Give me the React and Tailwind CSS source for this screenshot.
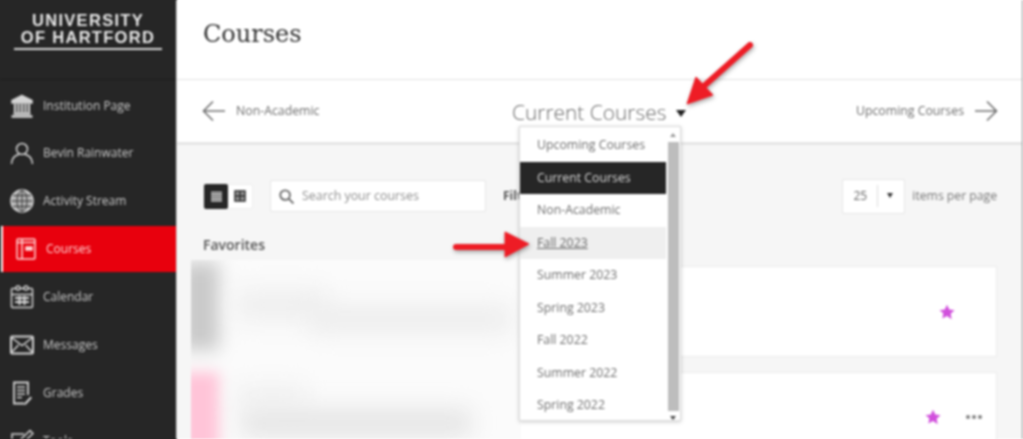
const Ico = ({ children, w = 24, h = 24, vb = "0 0 24 24", cls = "" }) => (
  <svg width={w} height={h} viewBox={vb} fill="none" stroke="#d4d4d4" strokeWidth="1.500" className={cls}>{children}</svg>
);
const icons = {
  inst: <Ico><path d="M12 1.500 2 6.500v2.500h20V6.500z" fill="#d4d4d4" /><path d="M5 10v8M8.500 10v8M12 10v8M15.500 10v8M19 10v8" strokeWidth="2.200" /><path d="M3.500 19.500h17M1.500 22.500h21" strokeWidth="2.400" /></Ico>,
  user: <Ico><circle cx="12" cy="8" r="5.500" /><path d="M1.500 23c.5-6 4-9 7.500-9.500M22.500 23c-.5-6-4-9-7.500-9.500" /></Ico>,
  globe: <Ico><circle cx="12" cy="12" r="11" fill="#b5b5b5" stroke="#d4d4d4" /><ellipse cx="12" cy="12" rx="5" ry="10.500" stroke="#333" strokeWidth="1" /><path d="M12 1.500v21M1.500 12h21M3 6.500h18M3 17.500h18" stroke="#333" strokeWidth="1" /></Ico>,
  cal: <Ico><rect x="1.500" y="3.500" width="21" height="19" rx="1" /><path d="M1.500 9.500h21" /><circle cx="8" cy="3" r="2" fill="#262626" /><circle cx="16" cy="3" r="2" fill="#262626" /><path d="M5 13h14M5 17h14M9.500 11v9M14.500 11v9" strokeWidth="2" /></Ico>,
  msg: <Ico h={20} vb="0 0 24 20"><rect x="1" y="1.500" width="22" height="17" rx="1" strokeWidth="2" /><path d="m1.500 2.500 10.500 8 10.500-8M1.500 17.500l7-7.500M22.500 17.500l-7-7.500" /></Ico>,
  grades: <Ico w={20} vb="0 0 20 24"><path d="M16 14V1.500H2v21h10" strokeWidth="1.800" /><path d="M5 6h8M5 9.500h8M5 13h8M5 16.500h5" /><path d="m12.500 22 6-6.500 1.500 1.500-6 6.500-2 .5z" fill="#d4d4d4" stroke="none" /></Ico>,
  tools: <Ico><path d="M21 11v11H2V5h12" /><path d="m9 15 1-4L20 1.500l3 3L13 14z" /></Ico>,
};
const nav = [
  ["Institution Page", "inst", "h-[46px]"],
  ["Bevin Rainwater", "user", "h-[47px]"],
  ["Activity Stream", "globe", "h-[50px]"],
];
const nav2 = [
  ["Calendar", "cal"],
  ["Messages", "msg"],
  ["Grades", "grades"],
  ["Tools", "tools"],
];
const Row = ({ label, icon, cls = "h-[48px]" }) => (
  <div className={`flex items-center shrink-0 pl-[10px] ${cls}`}>
    <span className="w-[24px] flex justify-center">{icons[icon]}</span>
    <span className="ml-[9px] text-[12px] font-medium text-[#c8c8c8]">{label}</span>
  </div>
);
const items = ["Upcoming Courses", "Current Courses", "Non-Academic", "Fall 2023", "Summer 2023", "Spring 2023", "Fall 2022", "Summer 2022", "Spring 2022"];
const Star = () => (
  <svg width="16" height="16" viewBox="0 0 24 24" fill="#d14fdc"><path d="m12 1 3.400 7.300 7.900 1-5.800 5.500 1.500 7.900L12 17.900l-7 3.800 1.500-7.900L.7 9.300l7.900-1z" /></svg>
);

export default function App() {
  return (
    <div className="w-[1023px] h-[439px] overflow-hidden">
      <div className="-m-[4px] p-[4px] w-[1031px] h-[447px] blur-[0.8px] bg-[linear-gradient(90deg,#262626_181px,#ffffff_181px)]">
        <div className="relative flex w-[1023px] h-[439px] bg-[#f6f6f6] font-['Open_Sans',sans-serif]">
          <aside className="w-[177px] shrink-0 bg-[#262626] flex flex-col overflow-hidden border-r border-[#d0d0d0]">
            <div className="h-[80px] shrink-0 border-b border-[#1c1c1c] flex flex-col items-center pt-[12px] font-['Liberation_Sans',sans-serif] font-bold text-[16.500px] leading-[17px] tracking-[1.300px] text-[#e8e8e8]">
              <span>UNIVERSITY</span>
              <span>OF HARTFORD</span>
              <span className="w-[148px] h-[2px] bg-[#d8d8d8] mt-[2px]" />
            </div>
            <div className="h-[3px] shrink-0" />
            {nav.map(([l, i, c]) => <Row key={l} label={l} icon={i} cls={c} />)}
            <div className="h-[46px] shrink-0 bg-[#e8000d] ml-[1px] border-l-[2px] border-white flex items-center pl-[13px] mb-[1px]">
              <svg width="20" height="22" viewBox="0 0 20 22" fill="none" stroke="#ffd5d5" strokeWidth="1.500"><rect x="1" y="1" width="18" height="20" rx="1" /><path d="M6 1v20M1 4.500h18" /><rect x="10" y="9" width="6" height="3" fill="#ffd5d5" /></svg>
              <span className="ml-[10px] text-[12px] font-medium text-[#ffd9d9]">Courses</span>
            </div>
            {nav2.map(([l, i]) => <Row key={l} label={l} icon={i} />)}
          </aside>

          <main className="flex-1 flex flex-col min-w-0 border-r border-[#8a8a8a]">
            <header className="h-[80px] shrink-0 bg-white border-b border-[#e2e2e2] pl-[26px] pt-[14px]">
              <h1 className="font-['DejaVu_Serif',serif] text-[24px] leading-[40px] text-[#333]">Courses</h1>
            </header>
            <div className="h-[65px] shrink-0 bg-white border-b-[3px] border-[#e6e6e6] flex items-center justify-between pl-[25px] pr-[24px]">
              <div className="flex items-center text-[12.300px] text-[#6e6e6e]">
                <svg width="24" height="22" viewBox="0 0 24 22" fill="none" stroke="#707070" strokeWidth="1.600"><path d="M23 11H2M11 1.500 1.500 11l9.500 9.500" /></svg>
                <span className="ml-[10px]">Non-Academic</span>
              </div>
              <div className="flex items-center absolute left-[512px] top-[97px]">
                <span className="text-[20.900px] font-light leading-[30px] text-[#6a6a6a]">Current Courses</span>
                <span className="ml-[10px] mt-[3px] w-0 h-0 border-x-[5px] border-x-transparent border-t-[7px] border-t-[#222]" />
              </div>
              <div className="flex items-center text-[12.300px] text-[#6e6e6e]">
                <span className="mr-[10px]">Upcoming Courses</span>
                <svg width="24" height="22" viewBox="0 0 24 22" fill="none" stroke="#707070" strokeWidth="1.600"><path d="M1 11h21M13 1.500l9.500 9.500-9.500 9.500" /></svg>
              </div>
            </div>

            <div className="flex-1 min-h-0 flex flex-col pl-[26px] pr-[25px]">
              <div className="flex items-center h-[32px] mt-[35px] shrink-0">
                <div className="flex h-[25px] w-[50px] rounded-[2px] bg-white border border-[#eee]">
                  <span className="w-[25px] -my-px bg-[#262626] rounded-[2px] flex items-center justify-center">
                    <svg width="11" height="11" viewBox="0 0 11 11" stroke="#ddd" strokeWidth="1.700"><path d="M0 1.500h11M0 4.200h11M0 6.900h11M0 9.600h11" /></svg>
                  </span>
                  <span className="w-[25px] flex items-center justify-center">
                    <svg width="12" height="12" viewBox="0 0 12 12" fill="#999" stroke="#2c2c2c" strokeWidth="1.500"><rect x="1" y="1" width="10" height="10" /><path d="M6 1v10M1 6h10" /></svg>
                  </span>
                </div>
                <div className="ml-[17px] w-[216px] h-[32px] bg-white border border-[#e6e6e6] rounded-[2px] flex items-center pl-[8px]">
                  <svg width="15" height="15" viewBox="0 0 14 14" fill="none" stroke="#666" strokeWidth="1.700"><circle cx="5.700" cy="5.700" r="4.500" /><path d="m9 9 4.500 4.500" /></svg>
                  <span className="ml-[8px] text-[12.400px] text-[#8f8f8f]">Search your courses</span>
                </div>
                <span className="ml-[17px] text-[12px] font-bold text-[#555]">Filter</span>
                <div className="ml-auto flex items-center">
                  <div className="w-[63px] h-[35px] bg-white border border-[#e6e6e6] rounded-[2px] flex items-center">
                    <span className="w-[35px] text-center text-[12px] text-[#666] border-r border-[#ddd] leading-[22px]">25</span>
                    <span className="ml-[9px] mb-[2px] w-0 h-0 border-x-[3.500px] border-x-transparent border-t-[5px] border-t-[#333]" />
                  </div>
                  <span className="ml-[7px] text-[12.200px] text-[#777]">items per page</span>
                </div>
              </div>

              <h2 className="mt-[23px] text-[14px] leading-[20px] font-semibold text-[#555] shrink-0">Favorites</h2>

              <div className="mt-[11px] -ml-[11px] h-[91px] shrink-0 bg-white border border-[#ececec] flex items-center justify-end pr-[41px]">
                <Star />
              </div>
              <div className="mt-[15px] -ml-[11px] h-[90px] shrink-0 bg-white border border-[#ececec] flex justify-end pt-[36px] pr-[14px] gap-[25px]">
                <Star />
                <span className="flex gap-[2px] pt-[6px] h-[4px]">
                  <i className="w-[4px] h-[4px] rounded-full bg-[#808080]" /><i className="w-[4px] h-[4px] rounded-full bg-[#808080]" /><i className="w-[4px] h-[4px] rounded-full bg-[#808080]" />
                </span>
              </div>
            </div>
          </main>

          {/* blurred-out course images, on top of the cards */}
          <div className="absolute left-[191px] top-[260px] w-[330px] h-[179px] overflow-hidden bg-[#fbfbfb]">
            <div className="absolute -left-[10px] top-[2px] w-[38px] h-[88px] bg-[#c9c9c9] blur-[9px]" />
            <div className="absolute -left-[10px] top-[112px] w-[38px] h-[80px] bg-[#ffc4d8] blur-[7px]" />
            <div className="absolute left-[45px] top-[30px] w-[90px] h-[30px] bg-[#eeeeee] blur-[12px]" />
            <div className="absolute left-[120px] top-[46px] w-[200px] h-[26px] bg-[#ececec] blur-[12px]" />
            <div className="absolute left-[45px] top-[125px] w-[70px] h-[20px] bg-[#f0f0f0] blur-[11px]" />
            <div className="absolute left-[50px] top-[148px] w-[230px] h-[30px] bg-[#e6e6e6] blur-[11px]" />
          </div>

          {/* dropdown */}
          <div className="absolute left-[519px] top-[126px] w-[162px] h-[295px] bg-white border border-[#dcdcdc] shadow-[0_1px_4px_rgba(0,0,0,0.2)] flex">
            <ul className="flex-1 flex flex-col pt-[2px]">
              {items.map((t) => (
                <li key={t} className={`h-[32.500px] shrink-0 flex items-center pl-[17px] text-[12.300px] ${t === "Current Courses" ? "bg-[#262626] text-[#d8d8d8] font-medium" : t === "Fall 2023" ? "bg-[#efefef] text-[#666] underline" : "text-[#6e6e6e]"}`}>{t}</li>
              ))}
            </ul>
            <div className="w-[14px] flex flex-col items-center bg-white">
              <span className="mt-[6px] w-0 h-0 border-x-[3px] border-x-transparent border-b-[4px] border-b-[#999]" />
              <span className="mt-[5px] w-[11px] h-[269px] bg-[#bdbdbd]" />
              <span className="mt-[5px] w-0 h-0 border-x-[3px] border-x-transparent border-t-[4px] border-t-[#444]" />
            </div>
          </div>

          {/* annotation arrows */}
          <svg className="absolute left-0 top-0 pointer-events-none" width="1023" height="439" viewBox="0 0 1023 439">
            <g fill="#ee1c25" stroke="#ee1c25" strokeLinejoin="round" style={{ filter: "drop-shadow(1px 2px 2px rgba(0,0,0,.35))" }}>
              <path d="M750 45 704 86" strokeWidth="6" strokeLinecap="round" />
              <path d="M687 104 696 77 713 95z" strokeWidth="1" />
              <path d="M456 247h50" strokeWidth="6" strokeLinecap="round" />
              <path d="M529 244 505 232v25z" strokeWidth="1" />
            </g>
          </svg>
        </div>
      </div>
    </div>
  );
}
